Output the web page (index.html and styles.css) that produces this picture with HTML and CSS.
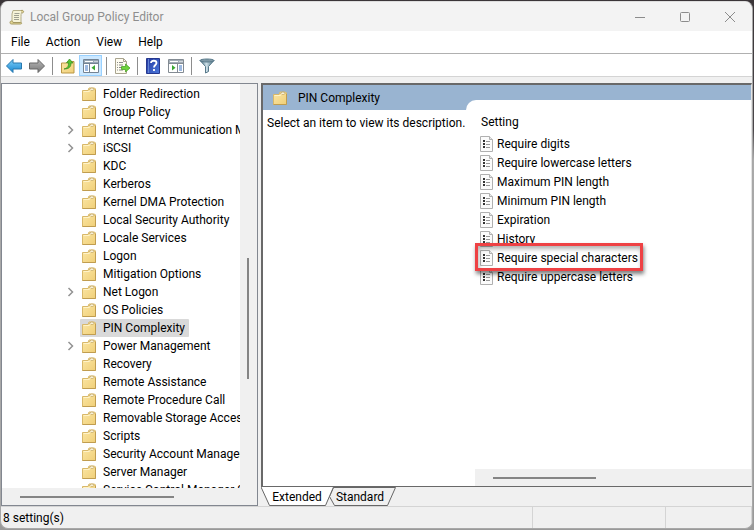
FILE: index.html
```html
<!DOCTYPE html>
<html lang="en">
<head>
    <meta charset="UTF-8">
    <title>Local Group Policy Editor</title>
    <link rel="stylesheet" href="styles.css">
</head>
<body>

<!-- shared icons -->
<svg class="defs" width="0" height="0">
    <defs>
        <linearGradient id="fold" x1="0" y1="0" x2="1" y2="1"><stop offset="0" stop-color="#fbe6a4"/><stop offset="1" stop-color="#f0cf78"/></linearGradient>
        <linearGradient id="blue" x1="0" y1="0" x2="0" y2="1"><stop offset="0" stop-color="#7fd0fa"/><stop offset="1" stop-color="#1585d0"/></linearGradient>
        <linearGradient id="gray" x1="0" y1="0" x2="0" y2="1"><stop offset="0" stop-color="#b8b8b8"/><stop offset="1" stop-color="#777"/></linearGradient>
        <linearGradient id="help" x1="0" y1="0" x2="1" y2="1"><stop offset="0" stop-color="#2438a0"/><stop offset="1" stop-color="#4a78dc"/></linearGradient>
        <linearGradient id="funnel" x1="0" y1="0" x2="1" y2="0"><stop offset="0" stop-color="#3f6577"/><stop offset=".45" stop-color="#cfe2ea"/><stop offset="1" stop-color="#426a7c"/></linearGradient>
    </defs>
    <symbol id="folder" viewBox="0 0 14 14">
        <path d="M.5 3.500h5.500l1-2.500h5.500l1 1v11.500H.5z" fill="url(#fold)" stroke="#d8b86a"/>
        <path d="M7.500 2.500c0-1.500 4-2 4.500-.5s-3 2-4.500.5z" fill="#fffbe8" stroke="#b99a52" stroke-width=".7"/>
        <path d="M.5 13.500h13V3" fill="none" stroke="#c09d50"/>
        <path d="M1.500 4.500h5.500l1.500-1" fill="none" stroke="#fff3c8"/>
    </symbol>
    <symbol id="policy" viewBox="0 0 14 16">
        <path d="M.5.500h9l3 3v12H.5z" fill="#fbfbfb" stroke="#b0b0b0"/>
        <path d="M9.500.500v3h3" fill="#e8e8e8" stroke="#b0b0b0"/>
        <path d="M3 4h2v2H3zM3 7h2v2H3zM3 10h2v2H3z" fill="#333"/>
        <path d="M6 5.500h4M6 8.500h4M6 11.500h4" stroke="#999"/>
    </symbol>
    <symbol id="chevron" viewBox="0 0 8 10">
        <path d="M1.500 1l4 4-4 4" fill="none" stroke="#929292" stroke-width="1.500"/>
    </symbol>
</svg>

<div class="window">
    <header class="titlebar">
        <svg class="logo" width="16" height="16" viewBox="0 0 16 16">
            <path d="M4 1.500h9.500c-1 2-1.500 3-1.500 6v6.500H3V5z" fill="#f6f3d8" stroke="#b5ae8a"/>
            <path d="M12 1.500c3-1 3.500 2.500 1 2.500M1 13.500c0-2 3-2 3 0h7.500c1.500 0 1.500 1.500 0 1.500H2.500C1.500 15 1 14.500 1 13.500z" fill="#e4d795" stroke="#a59963"/>
            <path d="M5.500 4.500h5M5 6.500h5M5 8.500h5M5 10.500h5" stroke="#a0a092"/>
        </svg>
        <h1>Local Group Policy Editor</h1>
        <div class="controls">
            <button aria-label="Minimize"><svg width="12" height="12"><path d="M1 6.500h10" stroke="#8c8c8c"/></svg></button>
            <button aria-label="Maximize"><svg width="12" height="12"><rect x="1.500" y="1.500" width="9" height="9" rx="1" fill="none" stroke="#8c8c8c"/></svg></button>
            <button aria-label="Close"><svg width="12" height="12"><path d="M1 1l10 10M11 1L1 11" stroke="#8c8c8c"/></svg></button>
        </div>
    </header>

    <nav class="menu">
        <button>File</button>
        <button>Action</button>
        <button>View</button>
        <button>Help</button>
    </nav>

    <div class="toolbar">
        <button aria-label="Back"><svg width="16" height="16" viewBox="0 0 16 16"><path d="M.5 8L7 1.500V5h8.500v6H7v3.500z" fill="url(#blue)" stroke="#2878ae"/></svg></button>
        <button aria-label="Forward"><svg width="16" height="16" viewBox="0 0 16 16"><path d="M15.500 8L9 1.500V5H.5v6H9v3.500z" fill="url(#gray)" stroke="#666"/></svg></button>
        <span class="sep"></span>
        <button aria-label="Up one level"><svg width="16" height="16" viewBox="0 0 16 16">
            <path d="M1.500 5h5l1-1.500h6.500v11.500H1.500z" fill="url(#fold)" stroke="#b99745"/>
            <path d="M4 11c4-1 4.500-3 4.500-6H6.500L9.500 1l3.500 4h-2c0 4-2 6-7 6z" fill="#55c332" stroke="#35891e" stroke-width=".7"/>
        </svg></button>
        <button class="on" aria-label="Show tree"><svg width="16" height="14" viewBox="0 0 16 14">
            <path d="M.5.5h15v13H.5z" fill="#fff" stroke="#748393"/><path d="M1 1h14v3H1z" fill="#97a6b5"/>
            <path d="M2 2.500h8M11.500 2.500h1M13.500 2.500h1" stroke="#fff"/><path d="M6.500 4v9.500M1 4.500h14" stroke="#748393"/>
            <path d="M2 7h3M2 9h3M2 11h3" stroke="#3d75c4"/><path d="M12 6v5.500L8.500 8.800z" fill="#3aa832"/>
        </svg></button>
        <span class="sep"></span>
        <button aria-label="Export list"><svg width="16" height="16" viewBox="0 0 16 16">
            <path d="M1.500.5h8l3 3v12h-11z" fill="#fefcf0" stroke="#a9a48f"/><path d="M9.500.5v3h3" fill="none" stroke="#a9a48f"/>
            <path d="M3 4.500h1M5 4.500h4M3 7h1M5 7h4M3 9.500h1M5 9.500h3M3 12h1M5 12h4" stroke="#888"/>
            <path d="M7.500 8.500h4V6l4.500 4-4.500 4v-2.500h-4z" fill="#6ed43c" stroke="#409b1c" stroke-width=".7"/>
        </svg></button>
        <span class="sep"></span>
        <button aria-label="Help"><svg width="14" height="16" viewBox="0 0 14 16">
            <path d="M.5.5h13v15H.5z" fill="url(#help)" stroke="#26388f"/><path d="M2.500 1v14" stroke="#6484d2"/>
            <path d="M5 5c0-3 5.500-3 5.500 0 0 2-2.500 2-2.500 4.500M8 11v2" fill="none" stroke="#fff" stroke-width="1.800"/>
        </svg></button>
        <button aria-label="Show action pane"><svg width="16" height="14" viewBox="0 0 16 14">
            <path d="M.5.5h15v13H.5z" fill="#fff" stroke="#838b93"/><path d="M1 1h14v3H1z" fill="#a3adb7"/>
            <path d="M2 2.500h8M11.500 2.500h1M13.500 2.500h1" stroke="#fff"/><path d="M9.500 4v9.500M1 4.500h14" stroke="#838b93"/>
            <path d="M11 7h3M11 9h3M11 11h3" stroke="#3d75c4"/><path d="M4 6v5.500l3.500-2.700z" fill="#3aa832"/>
        </svg></button>
        <span class="sep"></span>
        <button aria-label="Filter"><svg width="16" height="16" viewBox="0 0 16 16">
            <path d="M1 2.500L6.500 8.500v6.500l3-1.500v-5L15 2.500z" fill="url(#funnel)" stroke="#58798a"/>
            <ellipse cx="8" cy="2.500" rx="7" ry="1.500" fill="#7f99a6" stroke="#58798a"/>
        </svg></button>
    </div>

    <main class="panes">
        <section class="tree-pane">
            <ul class="tree">
                <li><svg class="folder"><use href="#folder"/></svg><span>Folder Redirection</span></li>
                <li><svg class="folder"><use href="#folder"/></svg><span>Group Policy</span></li>
                <li><svg class="chevron"><use href="#chevron"/></svg><svg class="folder"><use href="#folder"/></svg><span>Internet Communication Management</span></li>
                <li><svg class="chevron"><use href="#chevron"/></svg><svg class="folder"><use href="#folder"/></svg><span>iSCSI</span></li>
                <li><svg class="folder"><use href="#folder"/></svg><span>KDC</span></li>
                <li><svg class="folder"><use href="#folder"/></svg><span>Kerberos</span></li>
                <li><svg class="folder"><use href="#folder"/></svg><span>Kernel DMA Protection</span></li>
                <li><svg class="folder"><use href="#folder"/></svg><span>Local Security Authority</span></li>
                <li><svg class="folder"><use href="#folder"/></svg><span>Locale Services</span></li>
                <li><svg class="folder"><use href="#folder"/></svg><span>Logon</span></li>
                <li><svg class="folder"><use href="#folder"/></svg><span>Mitigation Options</span></li>
                <li><svg class="chevron"><use href="#chevron"/></svg><svg class="folder"><use href="#folder"/></svg><span>Net Logon</span></li>
                <li><svg class="folder"><use href="#folder"/></svg><span>OS Policies</span></li>
                <li class="selected"><svg class="folder"><use href="#folder"/></svg><span>PIN Complexity</span></li>
                <li><svg class="chevron"><use href="#chevron"/></svg><svg class="folder"><use href="#folder"/></svg><span>Power Management</span></li>
                <li><svg class="folder"><use href="#folder"/></svg><span>Recovery</span></li>
                <li><svg class="folder"><use href="#folder"/></svg><span>Remote Assistance</span></li>
                <li><svg class="folder"><use href="#folder"/></svg><span>Remote Procedure Call</span></li>
                <li><svg class="folder"><use href="#folder"/></svg><span>Removable Storage Access</span></li>
                <li><svg class="folder"><use href="#folder"/></svg><span>Scripts</span></li>
                <li><svg class="folder"><use href="#folder"/></svg><span>Security Account Manager</span></li>
                <li><svg class="folder"><use href="#folder"/></svg><span>Server Manager</span></li>
                <li><svg class="folder"><use href="#folder"/></svg><span>Service Control Manager Settings</span></li>
            </ul>
            <div class="scroll-y"><span></span></div>
            <div class="scroll-x"><span></span></div>
        </section>

        <section class="right">
            <div class="detail">
                <h2><svg class="folder"><use href="#folder"/></svg>PIN Complexity</h2>
                <p class="description">Select an item to view its description.</p>
                <div class="list">
                    <h3>Setting</h3>
                    <ul>
                        <li><svg class="policy"><use href="#policy"/></svg>Require digits</li>
                        <li><svg class="policy"><use href="#policy"/></svg>Require lowercase letters</li>
                        <li><svg class="policy"><use href="#policy"/></svg>Maximum PIN length</li>
                        <li><svg class="policy"><use href="#policy"/></svg>Minimum PIN length</li>
                        <li><svg class="policy"><use href="#policy"/></svg>Expiration</li>
                        <li><svg class="policy"><use href="#policy"/></svg>History</li>
                        <li class="marked"><svg class="policy"><use href="#policy"/></svg>Require special characters</li>
                        <li><svg class="policy"><use href="#policy"/></svg>Require uppercase letters</li>
                    </ul>
                    <div class="scroll-x"><span></span></div>
                </div>
            </div>
            <div class="tabs">
                <svg width="136" height="19" viewBox="0 0 136 19">
                    <path d="M72.500.5h62l-8 18h-53l-5-9z" fill="#f0f0f0" stroke="#666"/>
                    <path d="M0 0l8.500 18.500h56L72.500 0" fill="#fff" stroke="#666"/>
                </svg>
                <button>Extended</button>
                <button>Standard</button>
            </div>
        </section>
    </main>

    <footer class="status">
        <span>8 setting(s)</span>
        <span></span>
        <span></span>
    </footer>
</div>

</body>
</html>
```
FILE: styles.css
```css
* { margin: 0; padding: 0; box-sizing: border-box; }
body { height: 100vh; padding: 1px 1px 1px 0; overflow: hidden; font: 12px/18px "Segoe UI", Roboto, sans-serif; color: #000; background: linear-gradient(#3a3538 0, #4a464a 130px, #aaa 160px, #999 100%); }
button { border: 0; background: none; font: inherit; color: inherit; }
ul { list-style: none; }
svg { display: block; flex: none; }
.defs { position: absolute; }
.folder { width: 14px; height: 14px; }
.policy { width: 14px; height: 16px; }
.chevron { width: 8px; height: 10px; }

.window { height: 100%; display: flex; flex-direction: column; overflow: hidden; background: #f0f0f0; border: 1px solid #a8a8a8; border-top-color: #ddd; border-radius: 8px; }


/**** title, menu ****/
.titlebar { flex: none; height: 29px; display: flex; align-items: center; background: #f3f3f3; color: #8e8e8e; }
.titlebar h1 { flex: 1; margin-left: 5px; font-size: 12px; font-weight: 400; }
.logo { margin-left: 8px; }
.controls { display: flex; }
.controls button { width: 45px; height: 28px; display: flex; align-items: center; justify-content: center; }
.menu { flex: none; height: 23px; padding-left: 10px; display: flex; align-items: center; gap: 16px; background: #fff; border-bottom: 1px solid #b0b0b0; }


/**** toolbar ****/
.toolbar { flex: none; height: 23px; padding: 1px 0 0 1px; display: flex; align-items: center; background: #fff; border-bottom: 1px solid #d4d4d4; }
.toolbar button { width: 23px; height: 21px; display: flex; align-items: center; justify-content: center; }
.toolbar .on { background: #cce8ff; border: 1px solid #99d1ff; }
.toolbar .sep { width: 1px; height: 18px; margin: 0 3px 0 4px; background: #8d8d8d; }


/**** tree ****/
.panes { flex: 1; min-height: 0; margin-top: 6px; display: flex; gap: 3px; }
.tree-pane { flex: none; width: 257px; display: grid; grid-template: minmax(0, 1fr) 17px / minmax(0, 1fr) 17px; border: 1px solid #828790; background: #f0f0f0; }
.tree { overflow: hidden; padding: 1px 0 0 65px; background: #fff; }
.tree li { height: 18px; display: flex; align-items: center; white-space: nowrap; }
.tree li > .folder { margin-left: 15px; }
.tree .chevron + .folder { margin-left: 7px; }
.tree .folder + span { margin-left: 7px; }
.tree .selected { width: max-content; margin-left: 13px; padding-right: 4px; background: #d9d9d9; border-radius: 1px; }
.tree .selected > .folder { margin-left: 2px; }


/**** scrollbars ****/
.scroll-y { position: relative; background: #f0f0f0; }
.scroll-y span { position: absolute; top: 43%; left: 7px; width: 2px; height: 30%; background: #858585; }
.scroll-x { height: 17px; display: flex; align-items: center; padding-left: 18px; background: #f0f0f0; }
.scroll-x span { width: 70%; height: 2px; background: #858585; }


/**** detail ****/
.right { flex: 1; min-width: 0; display: flex; flex-direction: column; }
.detail { flex: 1; min-height: 0; display: grid; grid-template: 15px 10px minmax(0, 1fr) / 203px minmax(0, 1fr); border: 2px solid #696969; border-width: 2px 1px 1px 2px; border-right-color: #e3e3e3; background: #fff; }
.detail h2 { grid-area: 1 / 1 / 3 / 3; display: flex; align-items: center; gap: 11px; padding-left: 10px; font-size: 12px; font-weight: 400; background: #99b4d1; }
.description { grid-area: 3 / 1; padding: 4px 0 0 4px; white-space: nowrap; }
.list { grid-area: 2 / 2 / 4 / 3; display: flex; flex-direction: column; background: #fff; border-top-left-radius: 10px; }
.list h3 { padding: 13px 0 3px 15px; font-size: 12px; font-weight: 400; }
.list ul { flex: 1; padding-left: 14px; }
.list li { height: 19px; display: flex; align-items: center; gap: 3px; }
.list .scroll-x { margin-left: 9px; }
.list .scroll-x span { width: 40%; }
.marked { position: relative; width: max-content; }
.marked::after { content: ''; position: absolute; inset: -5px -5px -4px -5px; border: 3px solid #ee4144; box-shadow: 1px 3px 4px rgba(0,0,0,.5), inset 1px 3px 4px rgba(0,0,0,.3); }


/**** tabs ****/
.tabs { flex: none; height: 19px; position: relative; display: flex; }
.tabs svg { position: absolute; top: 0; left: 0; }
.tabs button { position: relative; width: 72px; text-align: center; }
.tabs button + button { width: 54px; }


/**** status ****/
.status { flex: none; height: 22px; display: grid; grid-template-columns: minmax(0, 1fr) 133px 86px; align-items: stretch; border-top: 1px solid #d4d4d4; }
.status span { padding: 2px 0 0 2px; border-right: 1px solid #d4d4d4; }
```
